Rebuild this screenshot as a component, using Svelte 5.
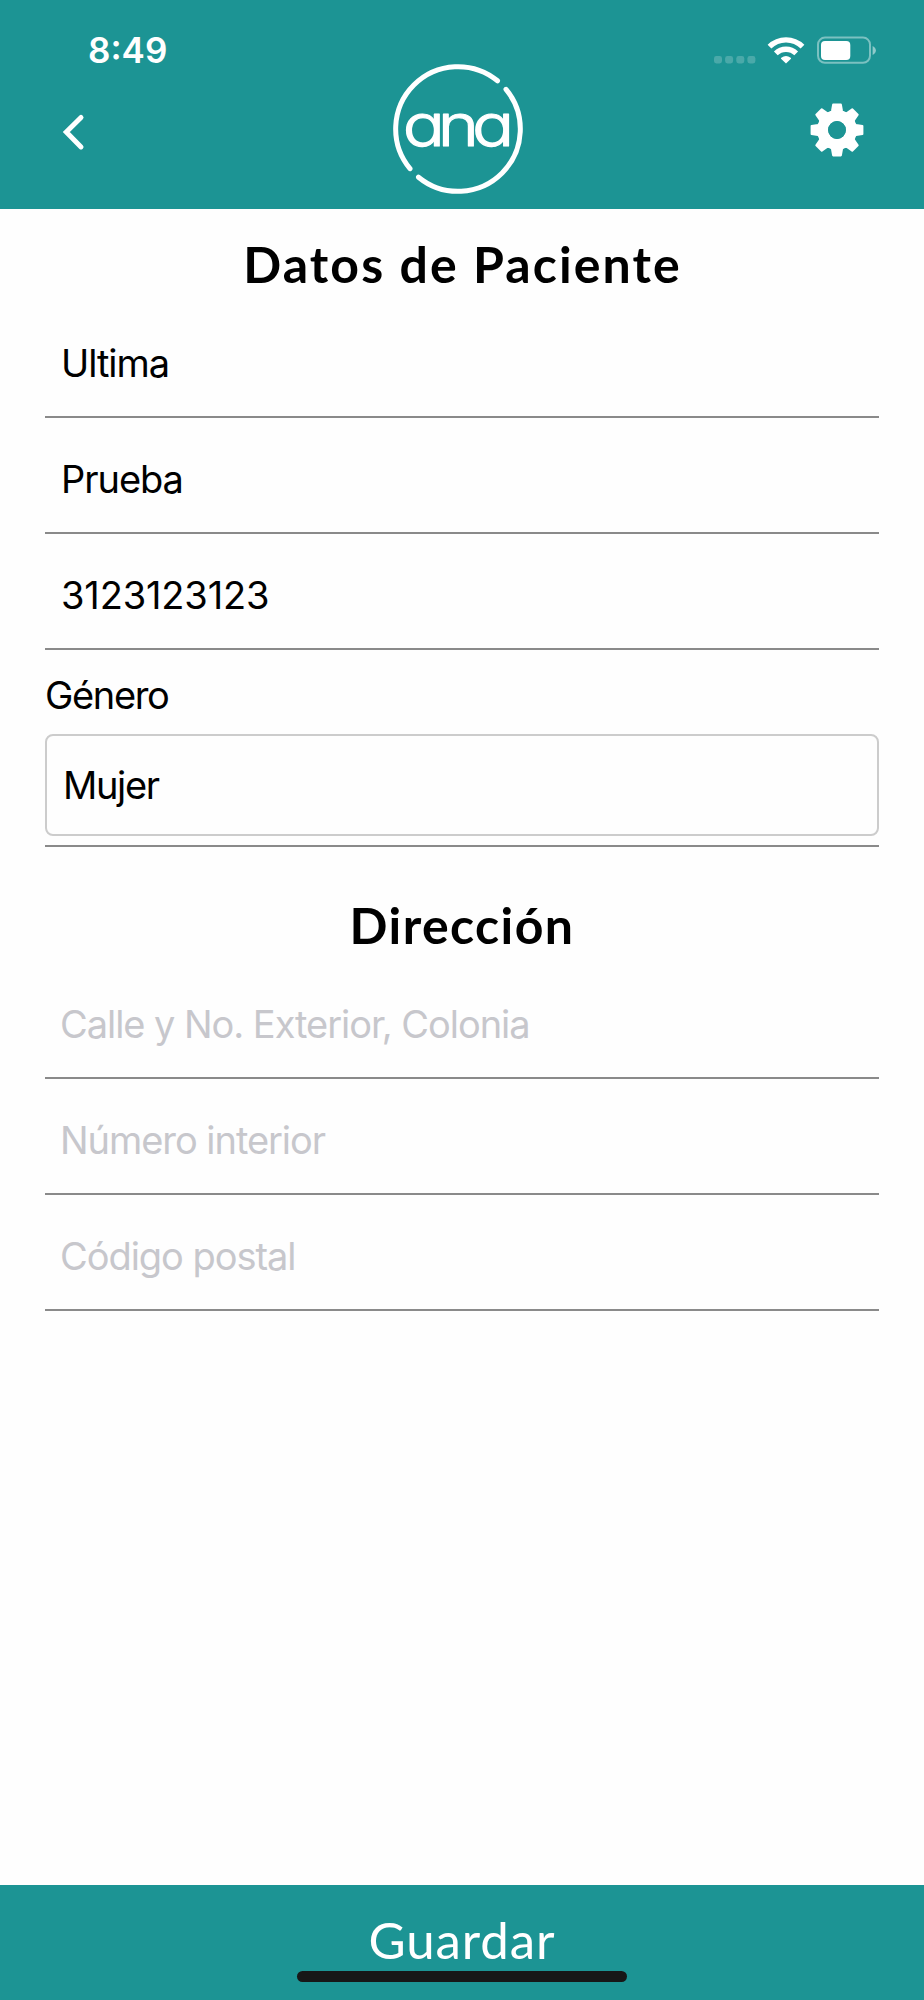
<script>
  // Datos del paciente
  const datos = [
    { valor: 'Ultima' },
    { valor: 'Prueba' },
    { valor: '3123123123', numerico: true }
  ];
  const genero = 'Mujer';

  // Campos de la dirección, todavía vacíos
  const direccion = ['Calle y No. Exterior, Colonia', 'Número interior', 'Código postal'];

  // Ángulos de los dientes del engrane
  const dientes = [0, 45, 90, 135, 180, 225, 270, 315];
</script>

<div class="pantalla">
  <header>
    <div class="estado">
      <span class="hora">8:49</span>
      <svg width="166" height="28" viewBox="712 36 166 28">
        <g fill="#fff" opacity="0.2">
          <rect x="714" y="56" width="8" height="7.4" rx="2.4" />
          <rect x="725.1" y="56" width="8" height="7.4" rx="2.4" />
          <rect x="736.3" y="56" width="8" height="7.4" rx="2.4" />
          <rect x="747.4" y="56" width="8" height="7.4" rx="2.4" />
        </g>
        <!-- wifi -->
        <g fill="none" stroke="#fff" stroke-width="5.3">
          <path d="M769.5 46.6 A23.4 23.4 0 0 1 802.5 46.6" />
          <path d="M775.8 53.4 A14.6 14.6 0 0 1 796.2 53.4" />
        </g>
        <path d="M786 63.4 L781 58.7 Q780.7 58.1 781.3 57.7 Q786 54.4 790.7 57.7 Q791.3 58.1 791 58.7 Z" fill="#fff" />
        <!-- batería -->
        <rect x="818" y="37.6" width="52" height="25.2" rx="7" fill="none" stroke="#fff" stroke-width="2" opacity="0.42" />
        <rect x="821" y="41" width="29.3" height="19" rx="4" fill="#fff" />
        <path d="M872.6 46 Q875.9 47.6 875.9 50.5 Q875.9 53.4 872.6 55 Z" fill="#fff" opacity="0.5" />
      </svg>
    </div>

    <nav>
      <button class="atras" aria-label="Atrás">
        <svg width="26" height="38" viewBox="60 113 26 38">
          <path d="M81 117.4 L66.3 132.1 L81 146.9" fill="none" stroke="#fff" stroke-width="5" stroke-linecap="round" />
        </svg>
      </button>
      <svg class="logo" width="132" height="132" viewBox="-66 -66 132 132">
        <g fill="none" stroke="#fff" stroke-width="5" stroke-linecap="round">
          <path d="M-48 39.7 A62.3 62.3 0 0 1 39.5 -48.2" />
          <path d="M48 -39.7 A62.3 62.3 0 0 1 -39.5 48.2" />
        </g>
        <text x="-2.6" y="16.6" text-anchor="middle" transform="scale(1.19 1)">ana</text>
      </svg>
      <button class="ajustes" aria-label="Ajustes">
        <svg width="54" height="54" viewBox="-27 -27 54 54">
          <g fill="#fff" stroke="#fff" stroke-width="2" stroke-linejoin="round">
            {#each dientes as angulo}
              <path d="M-3.9 -25.4 H3.9 L5 -19 L7 -16.5 H-7 L-5 -19 Z" transform="rotate({angulo})" />
            {/each}
          </g>
          <circle r="14.4" fill="none" stroke="#fff" stroke-width="11" />
          <circle r="8.9" fill="#1c9494" />
        </svg>
      </button>
    </nav>
  </header>

  <main>
    <h1>Datos de Paciente</h1>
    {#each datos as campo}
      <div class="campo">
        <span class:numerico={campo.numerico}>{campo.valor}</span>
      </div>
    {/each}

    <div class="genero">
      <div class="etiqueta">Género</div>
      <div class="selector">{genero}</div>
    </div>

    <h1 class="segundo">Dirección</h1>
    {#each direccion as texto}
      <div class="campo vacio"><span>{texto}</span></div>
    {/each}
  </main>

  <footer>
    <button class="guardar">Guardar</button>
    <div class="indicador"></div>
  </footer>
</div>

<style>
  :global(body) {
    margin: 0;
    background: #fefefe;
  }

  .pantalla {
    display: flex;
    flex-direction: column;
    width: 924px;
    height: 2000px;
    background: #fefefe;
    color: #000;
    font-family: Inter, "Liberation Sans", sans-serif;
    font-size: 38px;
    letter-spacing: -1.05px;
  }

  svg {
    display: block;
  }

  button {
    padding: 0;
    border: 0;
    background: none;
    color: #fff;
  }

  header {
    height: 209px;
    background: #1c9494;
    color: #fff;
  }

  .estado {
    display: flex;
    align-items: center;
    justify-content: space-between;
    box-sizing: border-box;
    height: 64px;
    padding: 36px 46px 0 88px;
  }

  .hora {
    font-size: 35px;
    font-weight: 600;
    line-height: 28px;
    letter-spacing: 0;
  }

  nav {
    display: grid;
    grid-template-columns: 392px 132px 1fr;
    align-items: start;
    margin-top: -1px;
  }

  .atras {
    justify-self: start;
    margin: 50px 0 0 60px;
  }

  .ajustes {
    justify-self: end;
    margin: 40px 60.5px 0 0;
  }

  .logo text {
    fill: #fff;
    stroke: #fff;
    stroke-width: 1.2px;
    stroke-linejoin: round;
    font-size: 59px;
    font-weight: 300;
    font-feature-settings: "cv11"; /* a de un solo piso */
    letter-spacing: -6px;
  }

  main {
    flex: 1;
    padding: 0 45px;
  }

  h1 {
    box-sizing: border-box;
    height: 93px;
    margin: 0;
    padding: 17px 0 0 1px;
    font: 700 50px/77px Lato, sans-serif;
    letter-spacing: 2.1px;
    text-align: center;
  }

  .segundo {
    height: 116px;
    padding: 40px 0 0;
    line-height: 77px;
    letter-spacing: 1.4px;
  }

  .campo {
    display: flex;
    align-items: center;
    box-sizing: border-box;
    height: 116px;
    padding: 8px 15px 0 16px;
    border-bottom: 2px solid #8a8a8a;
  }

  .numerico {
    letter-spacing: -0.15px;
  }

  .vacio {
    padding-left: 15px;
    color: #c7c7cc;
  }

  .genero {
    box-sizing: border-box;
    height: 197px;
    border-bottom: 2px solid #8a8a8a;
    letter-spacing: -1.35px;
  }

  .etiqueta {
    height: 78px;
    padding-top: 6px;
    line-height: 78px;
  }

  .selector {
    box-sizing: border-box;
    height: 102px;
    padding-left: 16px;
    border: 2px solid #ccc;
    border-radius: 8px;
    line-height: 98px;
  }

  footer {
    display: flex;
    flex-direction: column;
    align-items: center;
    height: 115px;
    background: #1c9494;
  }

  .guardar {
    height: 86px;
    padding-top: 24px;
    font: 400 51px/62px Lato, sans-serif;
    letter-spacing: 0.9px;
  }

  .indicador {
    width: 330px;
    height: 11px;
    border-radius: 6px;
    background: #171717;
  }
</style>
